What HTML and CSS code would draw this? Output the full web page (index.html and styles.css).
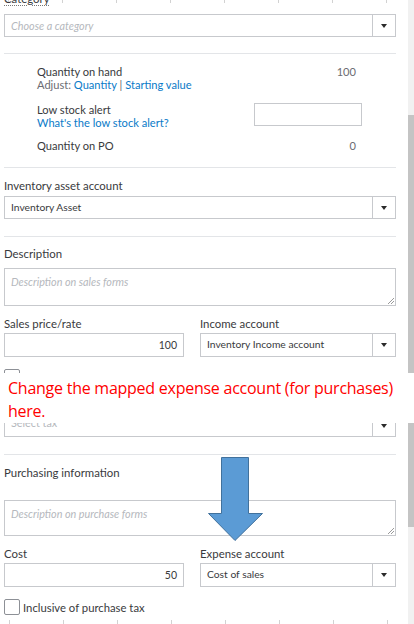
FILE: index.html
```html
<!DOCTYPE html>
<html lang="en">
<head>
<meta charset="utf-8">
<title>Product form</title>
<link rel="stylesheet" href="styles.css">
</head>
<body>
<div class="page">
  <section class="shot shot-top">
    <div class="form">
      <div class="label label-cut"><span class="dotted">Category</span></div>
      <div class="select select-full mt8">
        <span class="select-value ph">Choose a category</span>
        <span class="select-btn"><span class="caret"></span></span>
      </div>
      <div class="divider mt16"></div>
      <div class="stock">
        <div class="stock-row">
          <div>
            <div class="stock-title">Quantity on hand</div>
            <div class="stock-sub">Adjust: <span class="link">Quantity</span> | <span class="link">Starting value</span></div>
          </div>
          <div class="stock-val">100</div>
        </div>
        <div class="stock-row row-alert">
          <div>
            <div class="stock-title">Low stock alert</div>
            <div class="stock-sub"><span class="link">What's the low stock alert?</span></div>
          </div>
          <div class="alert-input"></div>
        </div>
        <div class="stock-row row-po">
          <div class="stock-title">Quantity on PO</div>
          <div class="stock-val">0</div>
        </div>
      </div>
      <div class="divider mt15"></div>
      <div class="label mt11">Inventory asset account</div>
      <div class="select select-full mt3">
        <span class="select-value">Inventory Asset</span>
        <span class="select-btn"><span class="caret"></span></span>
      </div>
      <div class="divider mt17"></div>
      <div class="label mt10">Description</div>
      <div class="textarea ta-sales mt7">
        <span class="ph">Description on sales forms</span>
        <svg class="grip" width="7" height="7" viewBox="0 0 7 7"><path d="M1 7L7 1M4 7L7 4" stroke="#9a9a9a" stroke-width="1"/></svg>
      </div>
      <div class="pair mt11">
        <div class="label">Sales price/rate</div>
        <div class="label">Income account</div>
        <div class="input num">100</div>
        <div class="select">
          <span class="select-value">Inventory Income account</span>
          <span class="select-btn"><span class="caret"></span></span>
        </div>
      </div>
      <div class="check-row mt12"><span class="checkbox"></span><span class="check-label">Inclusive of tax</span></div>
    </div>
    <div class="scroll">
      <div class="track track-top"></div>
      <div class="thumb thumb-top"></div>
    </div>
  </section>

  <section class="band">
    <p class="note">Change the mapped expense account (for purchases)<br>here.</p>
  </section>

  <section class="shot shot-bottom">
    <div class="form">
      <div class="cut">
        <div class="select select-full cut-select">
          <span class="select-value ph-tax">Select tax</span>
          <span class="select-btn"><span class="caret"></span></span>
        </div>
      </div>
      <div class="divider mt17"></div>
      <div class="label mt11">Purchasing information</div>
      <div class="textarea ta-purchase mt20">
        <span class="ph">Description on purchase forms</span>
        <svg class="grip" width="7" height="7" viewBox="0 0 7 7"><path d="M1 7L7 1M4 7L7 4" stroke="#9a9a9a" stroke-width="1"/></svg>
      </div>
      <div class="pair mt11">
        <div class="label">Cost</div>
        <div class="label">Expense account</div>
        <div class="input num">50</div>
        <div class="select">
          <span class="select-value">Cost of sales</span>
          <span class="select-btn"><span class="caret"></span></span>
        </div>
      </div>
      <div class="check-row mt12"><span class="checkbox"></span><span class="check-label">Inclusive of purchase tax</span></div>
    </div>
    <div class="scroll">
      <div class="thumb thumb-bottom"></div>
      <div class="track track-bottom"></div>
    </div>
  </section>

  <svg class="arrow" width="56" height="85" viewBox="0 0 56 85">
    <polygon points="13.5,0.5 40.5,0.5 40.5,56.5 54.5,56.5 27,83.5 0.5,56.5 13.5,56.5" fill="#5b9bd5" stroke="#41719c" stroke-width="1"/>
  </svg>
</div>
</body>
</html>
```

FILE: styles.css
```css
* { box-sizing: border-box; }

body {
  margin: 0;
  background: #fff;
  font-family: Lato, "Open Sans", sans-serif;
  color: #393a3d;
}

.page {
  position: relative;
  width: 414px;
  height: 624px;
  overflow: hidden;
  background: #fff;
}

.shot {
  display: flex;
  overflow: hidden;
}

.shot-top {
  height: 373px;
  background-image: repeating-linear-gradient(to right, transparent 0, transparent 8px, #d2d2d2 8px, #d2d2d2 9px, transparent 9px, transparent 54px);
  background-size: 100% 3px;
  background-repeat: no-repeat;
  background-position: 0 0;
}

.shot-bottom {
  height: 201px;
  background-image: repeating-linear-gradient(to right, transparent 0, transparent 9px, #d2d2d2 9px, #d2d2d2 10px, transparent 10px, transparent 54px);
  background-size: 100% 4px;
  background-repeat: no-repeat;
  background-position: 0 100%;
}

.form {
  width: 408px;
  padding: 0 12px 0 4px;
  flex: none;
}

.scroll {
  width: 6px;
  display: flex;
  flex-direction: column;
}

.track { background: #f1f1f1; }
.thumb { background: #c4c4c4; }
.track-top { height: 115px; }
.thumb-top { flex: 1; }
.thumb-bottom { height: 104px; }
.track-bottom { flex: 1; }

.mt3 { margin-top: 3px; }
.mt7 { margin-top: 7px; }
.mt8 { margin-top: 8px; }
.mt10 { margin-top: 10px; }
.mt11 { margin-top: 11px; }
.mt12 { margin-top: 12px; }
.mt15 { margin-top: 15px; }
.mt16 { margin-top: 16px; }
.mt17 { margin-top: 17px; }
.mt20 { margin-top: 20px; }

.label {
  font-size: 11.4px;
  line-height: 14px;
  color: #393a3d;
  white-space: nowrap;
}

.label-cut {
  margin-top: -8px;
  position: relative;
}

.dotted {
  text-decoration: underline dotted #777;
  text-underline-offset: 2px;
}

.divider {
  height: 1px;
  background: #e3e5e8;
}

.select {
  display: flex;
  height: 24px;
  border: 1px solid #c7c9cd;
  background: #fff;
}

.select-full { height: 23px; }

.select-value {
  flex: 1;
  padding-left: 6px;
  font-size: 10.3px;
  line-height: 21px;
  color: #393a3d;
  white-space: nowrap;
  overflow: hidden;
}

.ph, .ph-tax {
  font-style: italic;
  font-size: 10.8px;
  color: #b5b8bd;
}

.ph-tax {
  font-style: normal;
  line-height: 15px;
}

.select-btn {
  width: 23px;
  border-left: 1px solid #c7c9cd;
  display: flex;
  align-items: center;
  justify-content: center;
}

.caret {
  width: 0;
  height: 0;
  border-left: 3.5px solid transparent;
  border-right: 3.5px solid transparent;
  border-top: 4px solid #2b2b2b;
}

.stock {
  padding: 11px 34px 0 33px;
}

.stock-row {
  display: flex;
  justify-content: space-between;
  align-items: flex-start;
}

.row-alert { margin-top: 12px; }
.row-po { margin-top: 10px; }

.stock-title {
  font-size: 11.1px;
  line-height: 13px;
  color: #393a3d;
  white-space: nowrap;
}

.stock-sub {
  font-size: 11.1px;
  line-height: 13px;
  color: #6b6c72;
  white-space: nowrap;
}

.link { color: #0a7ac8; }

.stock-val {
  font-size: 11.1px;
  line-height: 13px;
  color: #6b6c72;
  margin-right: 6px;
}

.alert-input {
  width: 108px;
  height: 23px;
  border: 1px solid #c7c9cd;
}

.textarea {
  position: relative;
  border: 1px solid #c7c9cd;
  padding: 4px 6px 0 6px;
  line-height: 13px;
}

.ta-sales { height: 38px; }
.ta-purchase { height: 36px; }

.grip {
  position: absolute;
  right: 1px;
  bottom: 1px;
}

.pair {
  display: grid;
  grid-template-columns: 180px 196px;
  column-gap: 16px;
  row-gap: 2px;
}

.input {
  height: 24px;
  border: 1px solid #c7c9cd;
  font-size: 10.5px;
  line-height: 22px;
  color: #393a3d;
}

.num {
  text-align: right;
  padding-right: 6px;
}

.check-row {
  display: flex;
  align-items: center;
  height: 16px;
}

.checkbox {
  width: 16px;
  height: 16px;
  border: 1px solid #8d9096;
  border-radius: 2px;
  background: #fff;
  flex: none;
}

.check-label {
  margin-left: 3px;
  font-size: 11.3px;
  color: #393a3d;
  white-space: nowrap;
}

.cut {
  height: 14px;
  overflow: hidden;
}

.cut-select { margin-top: -9px; }

.band {
  height: 50px;
  background: #fff;
  padding: 4px 0 0 8px;
}

.note {
  margin: 0;
  font-family: "Open Sans", sans-serif;
  font-size: 16px;
  letter-spacing: -0.25px;
  line-height: 23px;
  color: #ff0000;
  white-space: nowrap;
}

.arrow {
  position: absolute;
  left: 208px;
  top: 457px;
}
```
